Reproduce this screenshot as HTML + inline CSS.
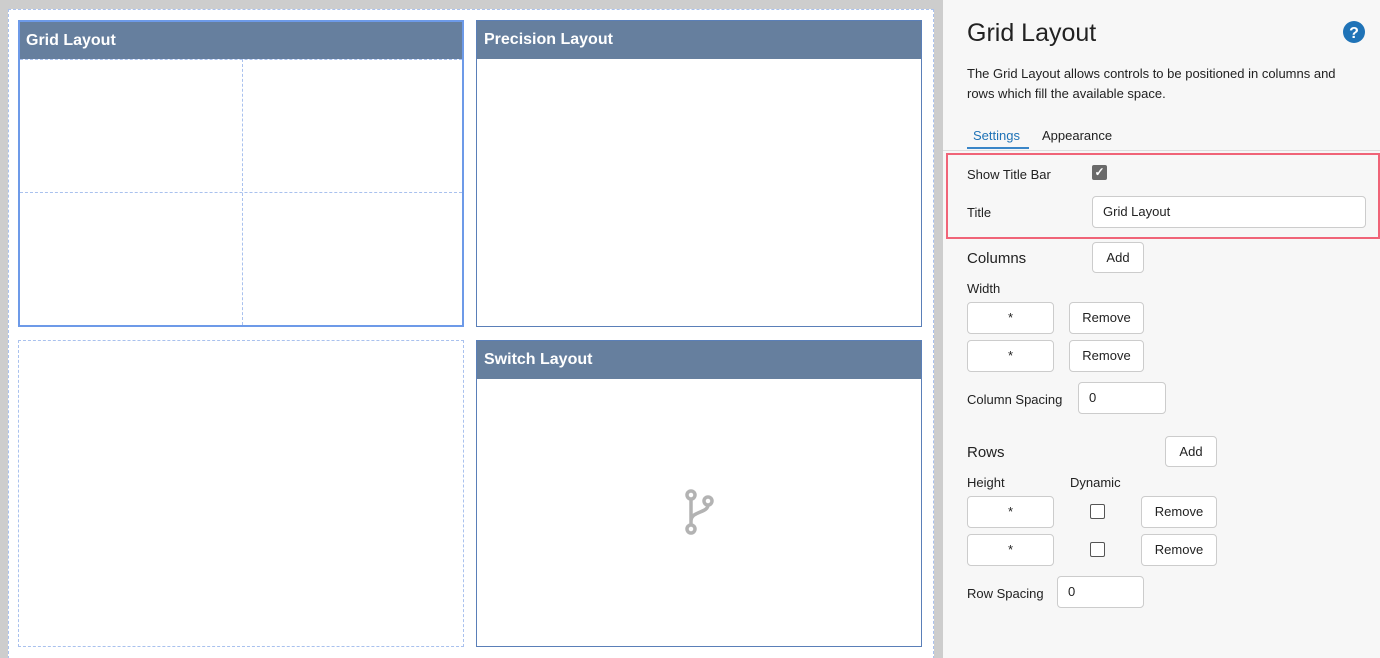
<!DOCTYPE html>
<html style="height:658px;overflow:hidden;background:#cdcdcd"><head><style>
*{box-sizing:border-box;margin:0;padding:0}
body{width:1380px;height:658px;background:#cdcdcd;font-family:"Liberation Sans",sans-serif;position:relative;overflow:hidden;color:#222}
.abs{position:absolute}
.canvas{left:8px;top:9px;width:926px;height:660px;background:#fff;border:1px dashed #a9c1ee}
.hdr{background:#667f9e;color:#fff;font-weight:bold;font-size:16px;height:38px;line-height:38px;padding-left:7px}
.panel{background:#fff}
.right{left:943px;top:0;width:437px;height:658px;background:#f7f7f7}
.lbl{font-size:13px;color:#222}
.inp{background:#fff;border:1px solid #ccc;border-radius:4px;font-size:13px}
.btn{background:#fff;border:1px solid #ccc;border-radius:4px;font-size:13px;text-align:center}
.cb{width:15px;height:15px;border:1px solid #555;border-radius:2px;background:#fff}
</style></head><body>
<div class="abs canvas"></div>
<div class="abs panel" style="left:18px;top:20px;width:446px;height:307px;border:2px solid #6d9ae8">
<div class="hdr" style="height:37px;line-height:37px;padding-left:6px">Grid Layout</div>
<div class="abs" style="left:0;top:37px;width:442px;border-top:1px dashed #a9c1ee"></div>
<div class="abs" style="left:222px;top:37px;height:266px;border-left:1px dashed #a9c1ee"></div>
<div class="abs" style="left:0;top:170px;width:442px;border-top:1px dashed #a9c1ee"></div>
</div>
<div class="abs panel" style="left:476px;top:20px;width:446px;height:307px;border:1px solid #5a7fb8">
<div class="hdr">Precision Layout</div></div>
<div class="abs panel" style="left:18px;top:340px;width:446px;height:307px;border:1px dashed #a9c1ee"></div>
<div class="abs panel" style="left:476px;top:340px;width:446px;height:307px;border:1px solid #5a7fb8">
<div class="hdr">Switch Layout</div>
<svg class="abs" style="left:200px;top:145px" width="40" height="50" viewBox="0 0 40 50">
<g fill="none" stroke="#b3b3b3" stroke-width="3.5"><circle cx="14" cy="9" r="4"/><circle cx="31" cy="15" r="4"/><circle cx="14" cy="43" r="4"/><path d="M14 13V39M31 19C31 27 14 25 14 35"/></g></svg>
</div>
<div class="abs right">
<div class="abs" style="left:24px;top:19px;font-size:25px;color:#222">Grid Layout</div>
<svg class="abs" style="left:400px;top:21px" width="22" height="22"><circle cx="11" cy="11" r="11" fill="#1f73b7"/><text x="11" y="17" text-anchor="middle" fill="#fff" font-weight="bold" font-size="16" font-family="Liberation Sans">?</text></svg>
<div class="abs" style="left:24px;top:64px;width:395px;font-size:13px;line-height:20px">The Grid Layout allows controls to be positioned in columns and rows which fill the available space.</div>
<div class="abs" style="left:30px;top:128px;font-size:13px;color:#1f73b7">Settings</div>
<div class="abs" style="left:24px;top:147px;width:62px;border-top:2px solid #3a86c8"></div>
<div class="abs" style="left:99px;top:128px;font-size:13px">Appearance</div>
<div class="abs" style="left:0;top:150px;width:437px;border-top:1px solid #ddd"></div>
<div class="abs" style="left:3px;top:153px;width:434px;height:86px;border:2px solid #f06478"></div>
<div class="abs lbl" style="left:24px;top:167px">Show Title Bar</div>
<div class="abs" style="left:149px;top:165px;width:15px;height:15px;background:#6a6a6a;border-radius:2px;color:#fff;font-size:12px;line-height:15px;text-align:center;font-weight:bold">✓</div>
<div class="abs lbl" style="left:24px;top:205px">Title</div>
<div class="abs inp" style="left:149px;top:196px;width:274px;height:32px;line-height:30px;padding-left:10px">Grid Layout</div>
<div class="abs" style="left:24px;top:250px;font-size:15px">Columns</div>
<div class="abs btn" style="left:149px;top:242px;width:52px;height:31px;line-height:29px">Add</div>
<div class="abs lbl" style="left:24px;top:281px">Width</div>
<div class="abs inp" style="left:24px;top:302px;width:87px;height:32px;line-height:30px;text-align:center">*</div>
<div class="abs btn" style="left:126px;top:302px;width:75px;height:32px;line-height:30px">Remove</div>
<div class="abs inp" style="left:24px;top:340px;width:87px;height:32px;line-height:30px;text-align:center">*</div>
<div class="abs btn" style="left:126px;top:340px;width:75px;height:32px;line-height:30px">Remove</div>
<div class="abs lbl" style="left:24px;top:392px">Column Spacing</div>
<div class="abs inp" style="left:135px;top:382px;width:88px;height:32px;line-height:30px;padding-left:10px">0</div>
<div class="abs" style="left:24px;top:444px;font-size:15px">Rows</div>
<div class="abs btn" style="left:222px;top:436px;width:52px;height:31px;line-height:29px">Add</div>
<div class="abs lbl" style="left:24px;top:475px">Height</div>
<div class="abs lbl" style="left:127px;top:475px">Dynamic</div>
<div class="abs inp" style="left:24px;top:496px;width:87px;height:32px;line-height:30px;text-align:center">*</div>
<div class="abs cb" style="left:147px;top:504px"></div>
<div class="abs btn" style="left:198px;top:496px;width:76px;height:32px;line-height:30px">Remove</div>
<div class="abs inp" style="left:24px;top:534px;width:87px;height:32px;line-height:30px;text-align:center">*</div>
<div class="abs cb" style="left:147px;top:542px"></div>
<div class="abs btn" style="left:198px;top:534px;width:76px;height:32px;line-height:30px">Remove</div>
<div class="abs lbl" style="left:24px;top:586px">Row Spacing</div>
<div class="abs inp" style="left:114px;top:576px;width:87px;height:32px;line-height:30px;padding-left:10px">0</div>
</div>
</body></html>
